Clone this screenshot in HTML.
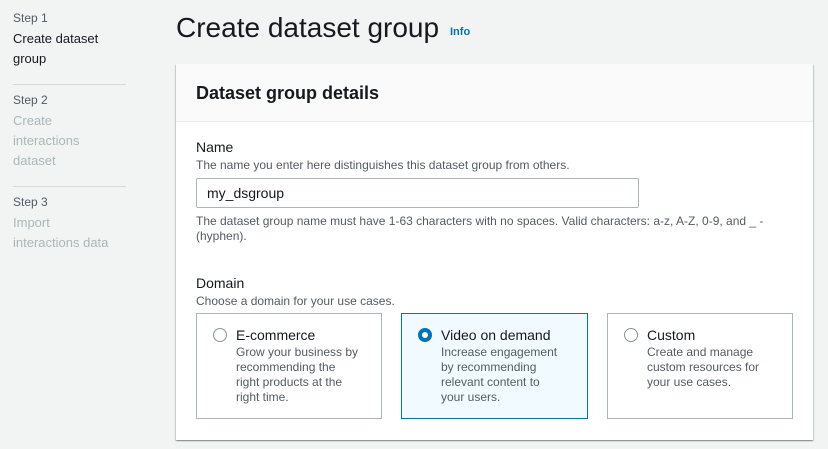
<!DOCTYPE html>
<html><head><style>
*{margin:0;padding:0;box-sizing:border-box}
body{width:828px;height:449px;background:#f2f3f3;font-family:"Liberation Sans",sans-serif;color:#16191f;position:relative;overflow:hidden}
.a{position:absolute;white-space:nowrap}
.nav{font-size:13px;line-height:20px}
.step{font-size:12px;color:#545b64}
.dis{color:#aab7b8}
.hr{position:absolute;left:13px;width:113px;height:1px;background:#d5dbdb}
.panel{position:absolute;left:176px;top:64px;width:637px;height:376px;background:#fff;box-shadow:0 1px 1px rgba(0,28,36,.3),1px 1px 1px rgba(0,28,36,.15),-1px 1px 1px rgba(0,28,36,.15)}
.ph{position:absolute;left:0;top:0;width:637px;height:58px;background:#fafafa;border-bottom:1px solid #eaeded}
.card{position:absolute;top:313px;height:106px;border:1px solid #aab7b8;background:#fff}
.card .r{position:absolute;left:16px;top:14px;width:14px;height:14px;border-radius:50%;border:1.5px solid #879596;background:#fff}
.card .t{position:absolute;left:39px;top:12px;font-size:14px;line-height:18px}
.card .d{position:absolute;left:39px;top:31px;font-size:12px;line-height:15px;color:#545b64;white-space:nowrap}
.sel{border-color:#0073bb;background:#f1faff}
.sel .r{border:4px solid #0073bb}
.s{font-size:12px;color:#545b64}
</style></head><body>
<div class="a step" style="left:13px;top:11px">Step 1</div>
<div class="a nav" style="left:13px;top:29px">Create dataset<br>group</div>
<div class="hr" style="top:84px"></div>
<div class="a step" style="left:13px;top:93px">Step 2</div>
<div class="a nav dis" style="left:13px;top:111px">Create<br>interactions<br>dataset</div>
<div class="hr" style="top:186px"></div>
<div class="a step" style="left:13px;top:195px">Step 3</div>
<div class="a nav dis" style="left:13px;top:213px">Import<br>interactions data</div>

<div class="a" style="left:176px;top:10px;font-size:28px;line-height:36px">Create dataset group</div>
<div class="a" style="left:450px;top:26px;font-size:11px;font-weight:bold;color:#0073bb">Info</div>

<div class="panel"><div class="ph"></div>
<div class="a" style="left:20px;top:19px;font-size:18px;font-weight:bold">Dataset group details</div>
</div>
<div class="a" style="left:196px;top:139px;font-size:14px">Name</div>
<div class="a s" style="left:196px;top:158px">The name you enter here distinguishes this dataset group from others.</div>
<div class="a" style="left:196px;top:178px;width:443px;height:30px;border:1px solid #aab7b8;border-radius:2px;background:#fff;font-size:14px;padding:6px 10px">my_dsgroup</div>
<div class="a s" style="left:196px;top:214px;line-height:15px">The dataset group name must have 1-63 characters with no spaces. Valid characters: a-z, A-Z, 0-9, and _ -<br>(hyphen).</div>
<div class="a" style="left:196px;top:275px;font-size:14px">Domain</div>
<div class="a s" style="left:196px;top:294px">Choose a domain for your use cases.</div>
<div class="card" style="left:196px;width:186px"><div class="r"></div><div class="t">E-commerce</div><div class="d">Grow your business by<br>recommending the<br>right products at the<br>right time.</div></div>
<div class="card sel" style="left:401px;width:187px"><div class="r"></div><div class="t">Video on demand</div><div class="d">Increase engagement<br>by recommending<br>relevant content to<br>your users.</div></div>
<div class="card" style="left:607px;width:186px"><div class="r"></div><div class="t">Custom</div><div class="d">Create and manage<br>custom resources for<br>your use cases.</div></div>
</body></html>
